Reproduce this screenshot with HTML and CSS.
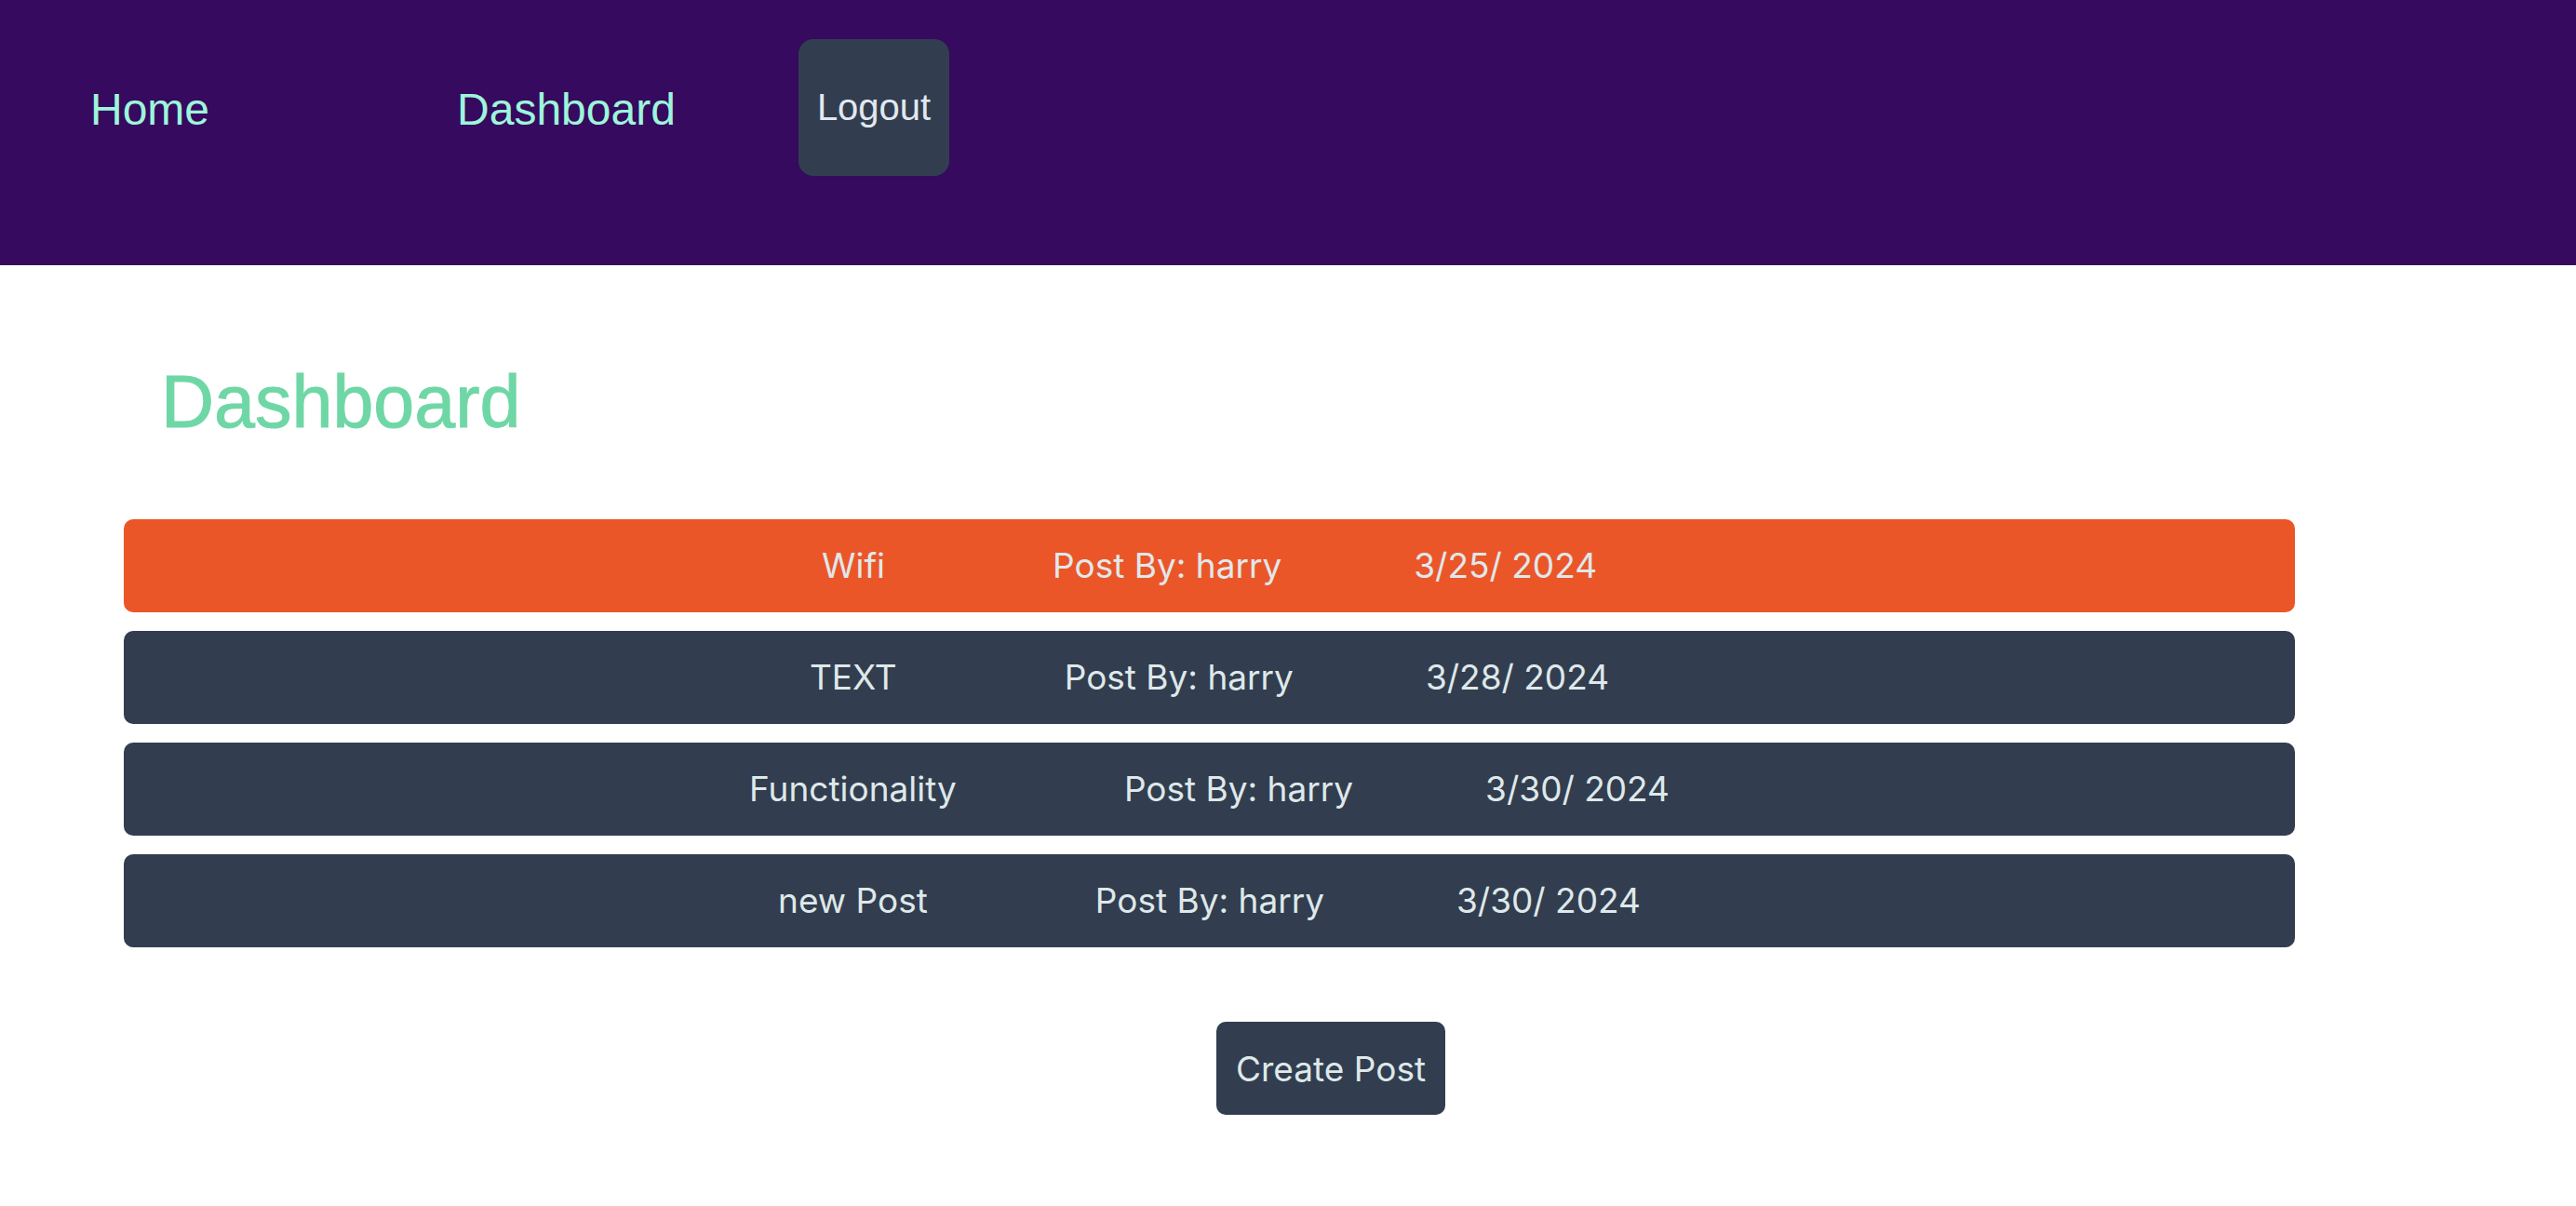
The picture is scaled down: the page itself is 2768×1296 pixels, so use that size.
FILE: index.html
```html
<!DOCTYPE html>
<html lang="en">
<head>
<meta charset="utf-8">
<title>Dashboard</title>
<link rel="stylesheet" href="styles.css">
</head>
<body>
<nav class="nav">
  <a class="nav-link nav-home" href="#">Home</a>
  <a class="nav-link nav-dash" href="#">Dashboard</a>
  <button class="logout">Logout</button>
</nav>
<main class="main">
  <h1 class="title">Dashboard</h1>
  <div class="posts">
    <div class="post post-active"><span class="post-title">Wifi</span><span class="post-by">Post By: harry</span><span class="post-date">3/25/ 2024</span></div>
    <div class="post"><span class="post-title">TEXT</span><span class="post-by">Post By: harry</span><span class="post-date">3/28/ 2024</span></div>
    <div class="post"><span class="post-title">Functionality</span><span class="post-by">Post By: harry</span><span class="post-date">3/30/ 2024</span></div>
    <div class="post"><span class="post-title">new Post</span><span class="post-by">Post By: harry</span><span class="post-date">3/30/ 2024</span></div>
  </div>
  <div class="actions">
    <button class="create">Create Post</button>
  </div>
</main>
</body>
</html>
```
FILE: styles.css
```css
* { box-sizing: border-box; }
html, body { margin: 0; padding: 0; background: #ffffff; }
body { font-family: "Liberation Sans", Arial, sans-serif; }

.nav {
  height: 285px;
  background: #350a5f;
  display: flex;
  align-items: center;
  padding: 44px 0 94px 97px;
}
.nav-link {
  font-size: 48px;
  color: #9ef5da;
  text-decoration: none;
  line-height: 1;
}
.nav-home { margin-right: 266px; }
.nav-dash { margin-right: 132px; }
.logout {
  height: 147px;
  margin-top: -4px;
  padding: 0 20px;
  border: none;
  border-radius: 16px;
  background: #323e4f;
  color: #e2e8f0;
  font-family: "Liberation Sans", Arial, sans-serif;
  font-size: 40px;
}

.main { padding: 102px 302px 0 133px; }
.title {
  margin: 0 0 81px 40px;
  font-size: 79px;
  line-height: 90px;
  font-weight: normal;
  color: #6fd7a6;
  -webkit-text-stroke: 1px #6fd7a6;
}
.posts { display: flex; flex-direction: column; gap: 20px; }
.post {
  height: 100px;
  border-radius: 10px;
  background: #323e4f;
  color: #dfe8ea;
  font-family: Inter, "Noto Sans", sans-serif;
  font-size: 37px;
  display: flex;
  align-items: center;
  justify-content: center;
  padding-bottom: 2px;
}
.post-active { background: #eb5629; }
.post-title { margin-right: 180px; }
.post-date { margin-left: 142px; }

.actions { padding: 80px 0 0 1174px; }
.create {
  height: 100px;
  padding: 0 21px;
  border: none;
  border-radius: 10px;
  background: #323e4f;
  color: #dfe8ea;
  font-family: Inter, "Noto Sans", sans-serif;
  font-size: 37px;
}
```
